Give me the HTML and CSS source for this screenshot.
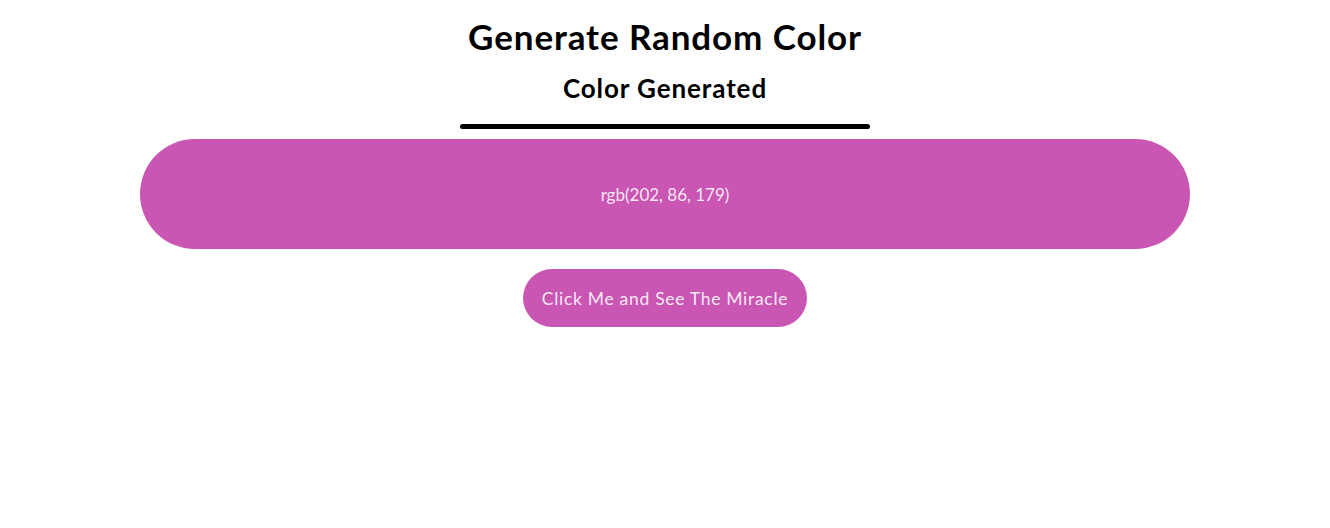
FILE: index.html
```html
<!DOCTYPE html>
<html>
<head>
<meta charset="utf-8">
<link rel="stylesheet" href="styles.css">
</head>
<body>
<main class="app">
  <h1 class="title">Generate Random Color</h1>
  <h2 class="subtitle">Color Generated</h2>
  <div class="rule"></div>
  <div class="swatch" style="background: rgb(202, 86, 179);">rgb(202, 86, 179)</div>
  <button class="btn" style="background: rgb(202, 86, 179);">Click Me and See The Miracle</button>
</main>
</body>
</html>
```

FILE: styles.css
```css
* { box-sizing: border-box; }
body {
  margin: 0;
  background: #fff;
  font-family: "Lato", "Noto Sans", sans-serif;
}
.app {
  display: flex;
  flex-direction: column;
  align-items: center;
  padding-top: 15px;
}
.title {
  margin: 0;
  font-size: 35px;
  font-weight: 700;
  line-height: 42px;
  letter-spacing: 0.9px;
  color: #000;
}
.subtitle {
  margin: 16px 0 0;
  font-size: 26px;
  font-weight: 700;
  line-height: 30px;
  letter-spacing: 0.9px;
  color: #000;
}
.rule {
  margin-top: 21px;
  width: 410px;
  height: 5px;
  border-radius: 3px;
  background: #000;
}
.swatch {
  margin-top: 10px;
  width: 1050px;
  height: 110px;
  border-radius: 55px;
  display: flex;
  align-items: center;
  justify-content: center;
  color: rgba(255, 255, 255, 0.88);
  font-size: 17px;
}
.btn {
  margin-top: 20px;
  width: 284px;
  height: 58px;
  border: none;
  border-radius: 29px;
  color: rgba(255, 255, 255, 0.88);
  font-family: inherit;
  font-size: 17.5px;
  letter-spacing: 0.7px;
  padding: 0;
}
```
